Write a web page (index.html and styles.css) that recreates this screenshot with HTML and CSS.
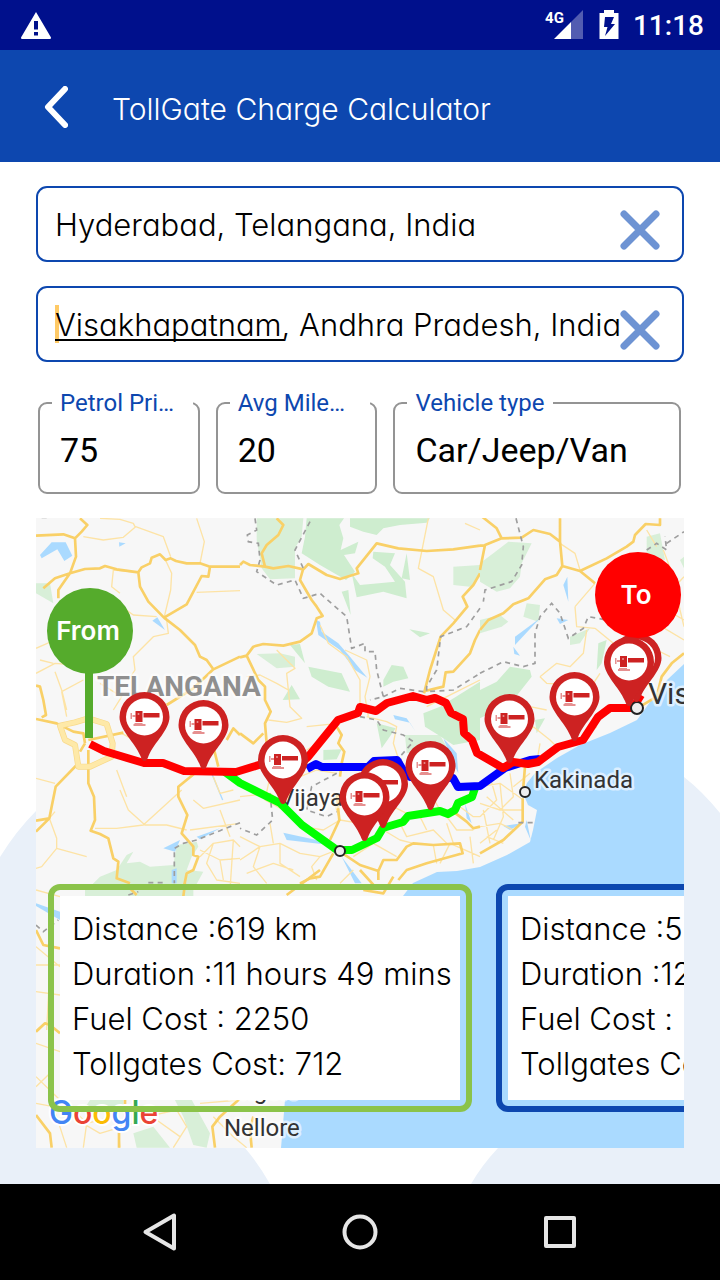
FILE: index.html
```html
<!DOCTYPE html>
<html lang="en">
<head>
<meta charset="utf-8">
<meta name="viewport" content="width=device-width, initial-scale=1">
<title>TollGate Charge Calculator</title>
<link rel="stylesheet" href="styles.css">
</head>
<body>
<div class="statusbar">
  <svg class="warn" viewBox="0 0 32 28" width="32" height="28" aria-hidden="true"><path fill="#fff" fill-rule="evenodd" d="M16 1 L31 26.500 Q31 28 30 28 H2 Q1 28 1 26.500 Z M14 10 V18.500 H18 V10 Z M14 21 V24.500 H18 V21 Z"/></svg>
  <div class="indicators">
    <span class="network">4G</span>
    <svg class="signal" viewBox="0 0 29 30" width="29" height="30" aria-hidden="true"><path fill="#fff" opacity=".32" d="M17 12 L29 0 V29 H17Z"/><path fill="#fff" d="M17 12 V29 H0Z"/></svg>
    <svg class="battery" viewBox="0 0 20 30" width="20" height="30" aria-hidden="true"><path fill="#fff" d="M5 0 H15 V3 H19.500 V29 H.5 V3 H5Z"/><path fill="#00108c" d="M6 7 H15 L12 14 H16 L6 26 L8.500 17 H5Z"/></svg>
    <span class="time">11:18</span>
  </div>
</div>
<header class="appbar">
  <button class="back" type="button" aria-label="Back"><svg viewBox="0 0 24 42" width="24" height="42"><path d="M21 3 L4 21 L21 39" fill="none" stroke="#fff" stroke-width="6" stroke-linecap="round" stroke-linejoin="round"/></svg></button>
  <h1>TollGate Charge Calculator</h1>
</header>
<main class="content">
  <svg class="backdrop" viewBox="0 162 720 1022" preserveAspectRatio="none" aria-hidden="true"><path fill="#e9f0f9" d="M0 857 Q16 831 36 811 L245 1148 Q258 1163 270 1184 H0Z M684 777 Q702 791 720 813 V1184 H471 Q482 1165 498 1148Z"/></svg>

  <div class="place">
    <input type="text" aria-label="From" value="Hyderabad, Telangana, India">
    <button class="clear" type="button" aria-label="Clear from"><svg viewBox="0 0 40 40" width="40" height="40"><path d="M4 4 L36 36 M36 4 L4 36"/></svg></button>
  </div>
  <div class="place composing">
    <input type="text" aria-label="To" value="Visakhapatnam, Andhra Pradesh, India">
    <button class="clear" type="button" aria-label="Clear to"><svg viewBox="0 0 40 40" width="40" height="40"><path d="M4 4 L36 36 M36 4 L4 36"/></svg></button>
  </div>

  <div class="options">
    <fieldset class="option"><legend><label for="price">Petrol Pri…</label></legend><input id="price" type="text" value="75"></fieldset>
    <fieldset class="option"><legend><label for="mileage">Avg Mile…</label></legend><input id="mileage" type="text" value="20"></fieldset>
    <fieldset class="option vehicle"><legend><label for="vehicle">Vehicle type</label></legend><select id="vehicle"><option>Car/Jeep/Van</option></select></fieldset>
  </div>

  <section class="map" aria-label="Route map">
    <svg class="tiles" viewBox="36 518 648 630" preserveAspectRatio="xMidYMid slice">
      <defs>
        <symbol id="pin" viewBox="-26 -26 52 72" overflow="visible">
          <path fill="#cd2222" d="M0 44 C-2 44 -3 42 -4 39 C-10 25 -25 13 -25 0 A25 25 0 0 1 25 0 C25 13 10 25 4 39 C3 42 2 44 0 44Z"/>
          <circle r="18.500" fill="#fff"/>
          <path fill="#cd2222" d="M-9 -6 H-2 V5 H-9Z M-1 -4 H15 V.5 H-1Z"/>
          <path fill="#cd2222" opacity=".5" d="M-14 -4 H-12.500 V2 H-14Z M-12 -2 H-9 V0 H-12Z M-10 6 H-2 V7 H1 V9 H-11 V7 H-10Z"/>
          <circle cx="-6" cy="-3" r="1" fill="#fff" opacity=".5"/>
        </symbol>
      </defs>
      <rect x="36" y="518" width="648" height="630" fill="#f7f7f7"/>
      <path class="water" d="M684 664 L667 680 650 702 637 720 610 733 580 745 557 758 535 773 527 783 523 793 528 805 537 810 533 830 530 842 507 855 480 867 457 871 437 872 413 883 403 896 340 1000 285 1100 281 1148 H684Z"/>

      <g transform="translate(0 510) scale(.33333)">
        <path class="park pale" d="M108 220 L150 220 160 280 108 250Z M260 1140 L300 1100 350 1080 380 1035 400 1025 380 1060 420 1055 450 1070 520 1065 530 1005 590 995 595 1010 575 1040 560 1080 610 1085 580 1140Z"/>
        <path class="water" d="M120 135 L155 97 H197 L217 137 193 153 172 118 125 145Z M357 97 L377 100 358 110Z M457 332 L472 322 495 360Z M490 1015 L540 990 525 1025Z M515 1080 L530 1075 V1120H515Z M590 980 L660 955 600 988Z"/>
        <path class="stream" d="M635 790 L668 870"/>
        <path class="lane" d="M250 80 L310 90 370 82 407 50 490 80 512 140 M300 25 L360 28 400 40 405 50 M495 147 L515 190 512 240 493 320 M590 25 L613 95 600 160 M590 247 L720 242 M415 187 L340 180 335 230 360 250 M365 290 L400 315 470 320 M500 330 L505 370 460 380 400 440 405 480 385 510 M108 415 L165 390 M108 490 L165 460 230 465 M165 485 L185 540 200 600 M340 600 L365 560 300 520 M185 545 L250 510 M120 450 L160 460 M108 805 L165 820 M148 925 L170 985 V1015 L125 1070 108 1075 M170 1015 L260 1040 M148 925 L165 905 M285 955 H350 L430 945 545 840 M360 840 L385 900 435 945 500 945 560 960 M350 780 L380 860 M570 960 L720 940 M580 870 L610 895 720 870 M600 1040 L640 1000 700 990 720 1010 M600 1020 L660 1050 720 1045 M640 1000 L620 1060 650 1110 720 1120 M660 1050 L670 1110 M700 990 L690 1140 M660 900 L690 980 M640 800 L660 850 700 840 M200 620 L185 545 M365 670 L420 700"/>
        <path class="road" d="M108 77 L190 73 225 85 245 65 262 45 240 25 M225 85 L228 140 210 190 175 240 175 265 M130 235 L165 205 210 190 255 177 300 175 315 168 350 178 415 187 425 172 450 160 455 143 480 133 497 150 512 145 528 153 560 160 600 160 630 170 720 170 M415 187 L420 230 445 275 492 323 560 283 605 198 625 200 630 170 M492 323 L540 360 585 405 600 440 620 450 640 478 720 440 M640 478 L580 535 500 585 M108 527 L120 530 130 570 138 615 125 622 M108 627 L170 640 220 665 250 670 255 700 M265 690 L370 668 M255 700 L240 725 M230 765 L167 830 148 925 108 965 M108 932 L148 925 M265 720 V820 L282 860 285 930 272 962 300 972 325 985 340 1045 355 1055 350 1105 390 1120 M590 785 L535 830 V860 L562 915 545 970 580 1010 V1035 L595 1040 580 1080 560 1090 550 1140 M635 690 L655 770 M680 690 L700 655 720 675"/>
        <path fill="none" stroke="#f8d98a" stroke-width="18" stroke-linejoin="round" d="M265 625 L225 637 180 647 195 690 225 705 235 770 270 770 335 740 338 700 320 642Z"/>
        <path fill="none" stroke="#fee9a8" stroke-width="14" stroke-linejoin="round" d="M265 625 L225 637 180 647 195 690 225 705 235 770 270 770 335 740 338 700 320 642Z"/>
        <path class="border" d="M720 938 L660 962 590 990 550 1000 523 1015 V1120 M445 1118 H500 M125 22 H150"/>
      </g>

      <g transform="translate(240 510) scale(.33333)">
        <path class="park pale" d="M50 25 H190 L185 80 165 115 V205 L90 208 65 175 50 90Z M640 170 L720 165 V200 L690 230 640 225Z M50 432 L120 430 165 440 V470 L110 475Z M495 675 H600 L620 710 500 730Z"/>
        <path class="park" d="M200 25 H312 L298 45 310 85 302 120 355 95 345 130 312 135 345 185 318 210 240 165 185 130 195 80Z M330 25 H570 L560 38 480 45 430 55 410 75 370 65 330 50Z M400 125 L465 130 450 165 495 215 500 265 430 245 350 262 335 190 360 225 465 215 435 170 398 145Z M500 130 L510 210 485 205Z M305 245 L325 240 332 315Z M508 358 L570 370 540 382Z M150 405 L180 402 195 460Z M205 470 L305 490 330 545 265 530 215 500Z M155 525 L180 568 128 570Z M430 510 L455 465 490 470 505 505 460 515 430 530Z M550 610 L600 590 720 515 V690 L640 705 595 675 555 650Z M410 640 L467 655 425 715Z M250 720 L305 718 290 748 250 750Z"/>
        <path class="water" d="M228 330 L240 335 245 365 295 400 330 440 382 503 345 480 300 420 235 375Z M460 615 L500 625 527 665 510 638 465 628Z M610 685 L650 730 655 790 640 760Z M130 968 L240 992 250 1003 140 990Z M305 1040 L365 1120 H345Z M675 880 L695 940 680 925Z"/>
        <path class="lane" d="M565 25 L550 100 535 175 580 200 610 300 645 330 M240 345 L265 400 320 440 360 510 360 590 M315 420 L380 450 390 500 375 560 385 620 M20 500 L60 495 110 520 145 540 150 590 185 625 140 637 85 630 M110 420 L130 440 165 475 140 490 145 540 M380 620 L440 635 470 650 460 700 480 760 M675 40 L720 60 M200 650 L295 640 M265 680 L200 720 M180 800 L230 780 290 790 M560 590 L640 550 720 510 M0 860 L90 850 130 880 M90 800 L75 870 130 900 M0 1050 L60 1010 120 1000 180 1030 240 1040 290 1020 M60 1010 L40 1070 80 1120 M120 1000 V1060 L180 1100 M0 980 L60 1010 M20 1090 L100 1060 160 1080 M100 1000 L90 940 M240 1040 L215 1070 230 1110 M280 870 L300 930 360 940 M300 930 L250 960 190 950 M340 1040 L400 1000 430 960 M400 1000 L470 1040 M430 960 L480 990 520 1000 M480 940 L500 980 580 960 620 1000 M540 920 L560 960 M580 1005 L590 1060 M620 920 L650 960 700 960 M660 890 L700 920 720 920 M640 1000 L620 940 M500 800 L560 830 600 900 M380 900 L440 880 500 910 M340 1080 L300 1120 M600 1060 L630 1000 720 1040 M690 980 L700 1060"/>
        <path class="road" d="M110 25 L130 45 115 75 80 105 65 130 75 170 M0 165 L10 155 30 165 75 170 100 175 145 168 190 178 205 162 260 195 300 207 355 190 350 175 410 100 475 115 560 123 640 118 720 107 M190 175 L180 210 215 270 230 290 248 318 230 325 215 370 180 395 130 407 70 402 40 410 20 437 0 442 M20 437 L55 510 75 530 75 570 92 605 75 640 80 700 M70 670 L40 700 0 670 M720 190 L700 225 668 260 682 290 640 340 602 380 570 480 552 550 M555 543 L610 530 617 487 640 485 690 430 705 390 720 360 M290 650 L305 675 295 700 313 725 305 760 300 800 M290 850 L298 930 270 990 M180 1120 L210 1105 240 1100 280 1030 M300 1025 L360 1065 415 1083 V1110 M415 1083 L430 1050 470 1050 500 1010 520 1000 580 1005 660 1000 668 1030 560 1060 500 1080 475 1110 M640 905 L680 935 700 955 720 950"/>
        <path class="border" d="M45 25 L50 60 22 75 25 95 55 100 60 150 50 185 110 225 165 210 190 265 240 250 320 320 335 415 375 400 V425 L405 425 410 480 430 560 390 570 M210 35 L165 120 190 175 M720 295 L680 350 602 380 590 480 560 530 560 545 640 540 720 490 M430 560 L480 535 550 545 M360 620 L410 630 430 660 490 675 520 695 480 740 490 770 M290 790 L215 830 200 900 260 920 290 905 M90 850 L98 930 50 975 0 955"/>
      </g>

      <g transform="translate(480 510) scale(.33333)">
        <path class="park pale" d="M40 130 L85 95 155 100 125 160 120 200 90 235 50 245 0 215 V160Z M0 330 L60 315 85 335 65 350 0 370Z M140 280 L180 285 175 335 130 320Z M500 80 L540 70 555 150 500 140Z M600 150 L612 140 V175Z M270 380 L330 355 300 400 270 405Z"/>
        <path class="park" d="M0 540 L50 515 90 470 150 480 155 500 100 570 20 615 0 625Z M165 630 L195 625 170 670Z M355 400 L380 390 365 460 350 480Z"/>
        <path class="water" d="M105 380 L180 325 105 405Z M100 410 L120 437 103 432Z M250 225 L262 200 265 275Z M230 325 L265 330 240 342Z M70 948 L125 940 90 960Z M140 930 L152 990 135 950Z"/>
        <path class="lane" d="M240 100 L285 130 300 180 M285 290 L290 350 345 355 M345 220 L285 290 M320 360 L310 430 270 470 230 460 180 500 M345 355 L400 400 M180 500 L200 520 280 525 M100 560 L150 590 200 600 M130 680 L160 650 210 690 240 720 M180 700 L170 760 M300 690 L350 650 M360 490 L340 520 M550 120 L580 200 600 300 612 350 M500 60 L530 110 M560 300 L612 330 M545 350 L612 390 M530 420 L570 440 M0 830 L60 820 130 870 M30 800 L50 870 0 920 M0 880 L60 900 128 900 M60 820 L70 920 40 990 M20 860 L100 930 M0 950 L60 940 100 960 M90 790 L100 860 60 900 M0 1000 L50 960 M10 900 L30 1000 M70 1000 L20 980 M150 790 L100 830 M555 300 L575 240 612 200"/>
        <path class="road" d="M0 15 L50 55 65 85 125 83 160 60 210 72 240 95 V25 M240 95 L247 168 300 183 345 220 M247 168 L230 195 195 208 145 265 100 283 70 310 25 330 0 360 M65 85 L15 105 0 180 M0 107 H15 M300 183 L380 145 440 110 460 95 465 75 497 42 540 45 V25 M612 430 L575 460 545 500 530 560 480 590 M135 770 L130 830 M128 865 V935 L70 990 0 1030"/>
        <path class="border" d="M108 25 L130 110 125 165 95 215 15 240 10 275 M0 490 L70 455 130 470 165 460 V370 L180 320 215 280 240 310 265 385 310 355 325 320 380 330 M500 120 L530 100 560 120 555 80 M560 100 L612 65 M115 938 H160"/>
      </g>

      <g transform="translate(0 870) scale(.33333)">
        <path class="park pale" d="M255 60 H580 V110 H255Z M270 690 H370 V720 H250Z M400 790 L460 770 510 833 H410Z M520 680 H570 L630 790 620 833 580 825 550 740Z"/>
        <path class="water" d="M108 100 L180 125 V150 L108 108Z"/>
        <path class="lane" d="M108 60 L180 80 M108 230 L180 290 M108 285 H180 M108 365 L180 375 M150 290 L140 480 M108 520 L180 545 M108 620 L180 690 M108 650 L150 610 M200 700 L260 760 250 833 M180 720 L300 790 400 760 M350 730 L360 833 M440 740 L530 720 560 770 520 833 M108 700 L160 710 200 833 M260 760 L340 740 M640 740 L700 800 740 833 M600 700 L720 690 M470 750 L540 800"/>
        <path class="road" d="M108 180 L130 225 180 235 M108 485 L135 460 150 465 180 490 M108 735 L150 790 155 833 M375 690 V740 L357 780 V833 M715 690 L660 740 637 770 645 833 M760 740 L750 780 755 833 M390 55 L410 75 M555 40 L550 80 M860 75 L920 30 960 0 M1080 0 L1130 55 M1090 60 L1150 70 1180 20"/>
        <path class="border" d="M108 165 L130 185 175 150 M385 75 L415 65"/>
      </g>

      <text class="state" x="97" y="696">TELANGANA</text>
      <text class="city" x="279" y="806">Vijaya</text>
      <text class="city" x="534" y="788">Kakinada</text>
      <text class="city large" x="648" y="704">Visakhapatnam</text>
      <text class="city" x="224" y="1136">Nellore</text>
      <text class="city" x="224" y="1099">Ongole</text>
      <text class="google" x="49" y="1124"><tspan fill="#4285f4">G</tspan><tspan fill="#ea4335">o</tspan><tspan fill="#fbbc05">o</tspan><tspan fill="#4285f4">g</tspan><tspan fill="#34a853">l</tspan><tspan fill="#ea4335">e</tspan></text>

      <g class="routes">
        <path stroke="#00ff00" d="M225 772 L240 783 280 803 302 825 337 850 352 850 377 838 383 828 403 822 408 816 440 811 448 814 455 810 458 803 472 797 475 788"/>
        <path stroke="#0000ff" d="M307 769 L316 764 322 767 368 767 374 761 397 760 403 770 410 777 453 778 458 787 480 786 505 768 530 760 540 759"/>
        <path stroke="#ff0000" d="M90 744 L104 751 144 763 H163 L184 771 236 772 262 764 300 764 308 757 338 720 358 713 360 707 376 711 387 703 413 696 427 700 435 698 446 703 451 713 463 719 464 733 472 740 477 753 503 768 513 762 528 764 538 762 558 747 583 740 598 717 610 708 633 708 641 695"/>
      </g>
      <g fill="#eee" stroke="#222" stroke-width="2"><circle cx="340" cy="851" r="5"/><circle cx="525" cy="792" r="5"/><circle cx="637" cy="708" r="6"/></g>
      <g>
        <use href="#pin" x="118.500" y="691" width="52" height="72"/>
        <use href="#pin" x="177.500" y="699" width="52" height="72"/>
        <use href="#pin" x="257" y="734" width="52" height="72"/>
        <use href="#pin" x="357" y="758" width="52" height="72"/>
        <use href="#pin" x="338.500" y="771" width="52" height="72"/>
        <use href="#pin" x="404.500" y="740" width="52" height="72"/>
        <use href="#pin" x="483.500" y="693" width="52" height="72"/>
        <use href="#pin" x="548.500" y="671" width="52" height="72"/>
        <use href="#pin" x="610.500" y="632" width="52" height="72"/>
        <use href="#pin" x="603" y="636" width="52" height="72"/>
      </g>
      <path fill="#55ab2c" d="M85 660 H93 V738 H85Z"/>
      <circle cx="90" cy="631" r="43" fill="#55ab2c"/>
      <circle cx="638" cy="595" r="43" fill="#ff0000"/>
      <text class="end" x="88" y="640">From</text>
      <text class="end" x="636" y="604">To</text>
    </svg>
    <div class="routes-list">
      <article class="route fastest"><div class="facts"><p>Distance :619 km</p><p>Duration :11 hours 49 mins</p><p>Fuel Cost : 2250</p><p>Tollgates Cost: 712</p></div></article>
      <article class="route"><div class="facts"><p>Distance :5</p><p>Duration :12</p><p>Fuel Cost :</p><p>Tollgates Cost:</p></div></article>
    </div>
  </section>
</main>
<nav class="navbar">
  <button type="button" aria-label="Back"><svg viewBox="0 0 40 40" width="40" height="40"><path d="M34 3.500 V36.500 L5.500 20Z"/></svg></button>
  <button type="button" aria-label="Home"><svg viewBox="0 0 40 40" width="40" height="40"><circle cx="20" cy="20" r="15.500"/></svg></button>
  <button type="button" aria-label="Recent apps"><svg viewBox="0 0 40 40" width="40" height="40"><rect x="6" y="6" width="28" height="28"/></svg></button>
</nav>
</body>
</html>
```
FILE: styles.css
```css
* { box-sizing: border-box; }

body {
  margin: 0;
  min-height: 100vh;
  display: flex;
  flex-direction: column;
  background: #fff;
  color: #000;
  font-family: Inter, Lato, sans-serif;
  font-weight: 300;
  font-feature-settings: "cv11";
}

button {
  padding: 0;
  border: 0;
  background: none;
}

svg { display: block; }

.statusbar {
  display: flex;
  justify-content: space-between;
  align-items: center;
  height: 50px;
  padding: 0 16px 0 20px;
  background: #00108c;
  color: #fff;
  font-family: Roboto, sans-serif;
}

.indicators {
  display: flex;
  align-items: center;
  height: 50px;
}

.network {
  align-self: flex-start;
  padding-top: 9px;
  font-size: 15px;
  line-height: 18px;
  font-weight: 700;
  margin-right: -10px;
}

.battery { margin: 0 14px 0 16px; }

.time {
  padding-top: 2px;
  font-size: 28px;
  font-weight: 500;
  line-height: 48px;
}

.appbar {
  display: flex;
  align-items: center;
  gap: 44px;
  height: 112px;
  padding: 6px 44px 0;
  background: #0d47af;
  color: #fff;
}

.back { padding-bottom: 5px; }

h1 {
  margin: 0;
  font-size: 30px;
  line-height: 40px;
  font-weight: 300;
}

.content {
  position: relative;
  z-index: 0;
  flex: 1;
  display: flex;
  flex-direction: column;
  gap: 24px;
  padding: 24px 36px 36px;
}

.backdrop {
  position: absolute;
  inset: 0;
  z-index: -1;
  width: 100%;
  height: 100%;
}

.place {
  position: relative;
  height: 76px;
  border: 2px solid #0d47af;
  border-radius: 11px;
  background: #fff;
}

.place input {
  position: relative;
  width: 100%;
  height: 72px;
  padding: 0 17px;
  border: 0;
  background: none;
  font: inherit;
  font-size: 31px;
  font-feature-settings: inherit;
  color: inherit;
}

.clear {
  position: absolute;
  top: 22px;
  right: 22px;
}

.clear path {
  stroke: #6d93d3;
  stroke-width: 7;
  stroke-linecap: round;
}

.composing::before {
  content: "";
  position: absolute;
  left: 17px;
  top: 17px;
  width: 4px;
  height: 38px;
  background: #ffca66;
}

.composing::after {
  content: "";
  position: absolute;
  left: 17px;
  top: 51px;
  width: 229px;
  height: 2px;
  background: #000;
}

.options {
  display: grid;
  grid-template-columns: 9fr 9fr 16fr;
  gap: 16px;
  padding: 3px 3px 0 2px;
}

.option {
  min-width: 0;
  margin: 0;
  padding: 0 5px 9px 12px;
  border: 2px solid #949494;
  border-radius: 9px;
  background: transparent;
  font-family: Roboto, sans-serif;
  font-weight: 400;
}

.option legend {
  width: 100%;
  padding: 0 8px;
  font-size: 24px;
  line-height: 28px;
  white-space: nowrap;
  color: #0d47af;
}

.option.vehicle legend { width: auto; }

.option input,
.option select {
  display: block;
  width: 100%;
  height: 66px;
  padding: 0 8px;
  border: 0;
  background: none;
  appearance: none;
  font: inherit;
  font-size: 34px;
  color: #000;
}

.map {
  flex: 1;
  position: relative;
  display: flex;
  flex-direction: column;
  justify-content: flex-end;
  min-height: 400px;
  padding: 0 0 36px 12px;
  overflow: hidden;
}

.tiles {
  position: absolute;
  inset: 0;
  width: 100%;
  height: 100%;
}

.water { fill: #aadaff; }
.park { fill: #ceedcf; }
.park.pale { fill: #d8efd8; }
.stream { fill: none; stroke: #aadaff; stroke-width: 4; }
.lane { fill: none; stroke: #fde3a5; stroke-width: 4; stroke-linejoin: round; }
.road { fill: none; stroke: #f9d067; stroke-width: 8; stroke-linejoin: round; }
.border { fill: none; stroke: #9e9e9e; stroke-width: 5; stroke-dasharray: 15 13; }

.state,
.city {
  font-family: Roboto, sans-serif;
  font-size: 24px;
  font-weight: 400;
  fill: #333;
  stroke: #fff;
  stroke-opacity: .6;
  stroke-width: 5px;
  stroke-linejoin: round;
  paint-order: stroke;
}

.city.large { font-size: 30px; }

.state {
  font-size: 28px;
  font-weight: 700;
  fill: #8f8f8f;
}

.google {
  font-family: Inter, sans-serif;
  font-size: 32px;
  font-weight: 500;
  stroke: #fff;
  stroke-width: 4px;
  paint-order: stroke;
}

.routes path {
  fill: none;
  stroke-width: 8;
  stroke-linejoin: round;
}

.end {
  font-family: Inter, sans-serif;
  font-size: 26px;
  font-weight: 600;
  fill: #fff;
  text-anchor: middle;
}

.routes-list {
  position: relative;
  display: flex;
  gap: 24px;
}

.route {
  flex: none;
  width: 424px;
  padding: 6px;
  border: 6px solid #0d47af;
  border-radius: 12px;
}

.route.fastest { border-color: #8bc34a; }

.facts {
  padding: 10px 12px 14px;
  background: #fff;
  font-size: 31px;
  line-height: 45px;
  white-space: nowrap;
}

.facts p { margin: 0; }

.navbar {
  display: flex;
  justify-content: center;
  align-items: center;
  gap: 160px;
  height: 96px;
  background: #000;
}

.navbar svg {
  fill: none;
  stroke: #e6e6e6;
  stroke-width: 4;
  stroke-linejoin: round;
}
```
